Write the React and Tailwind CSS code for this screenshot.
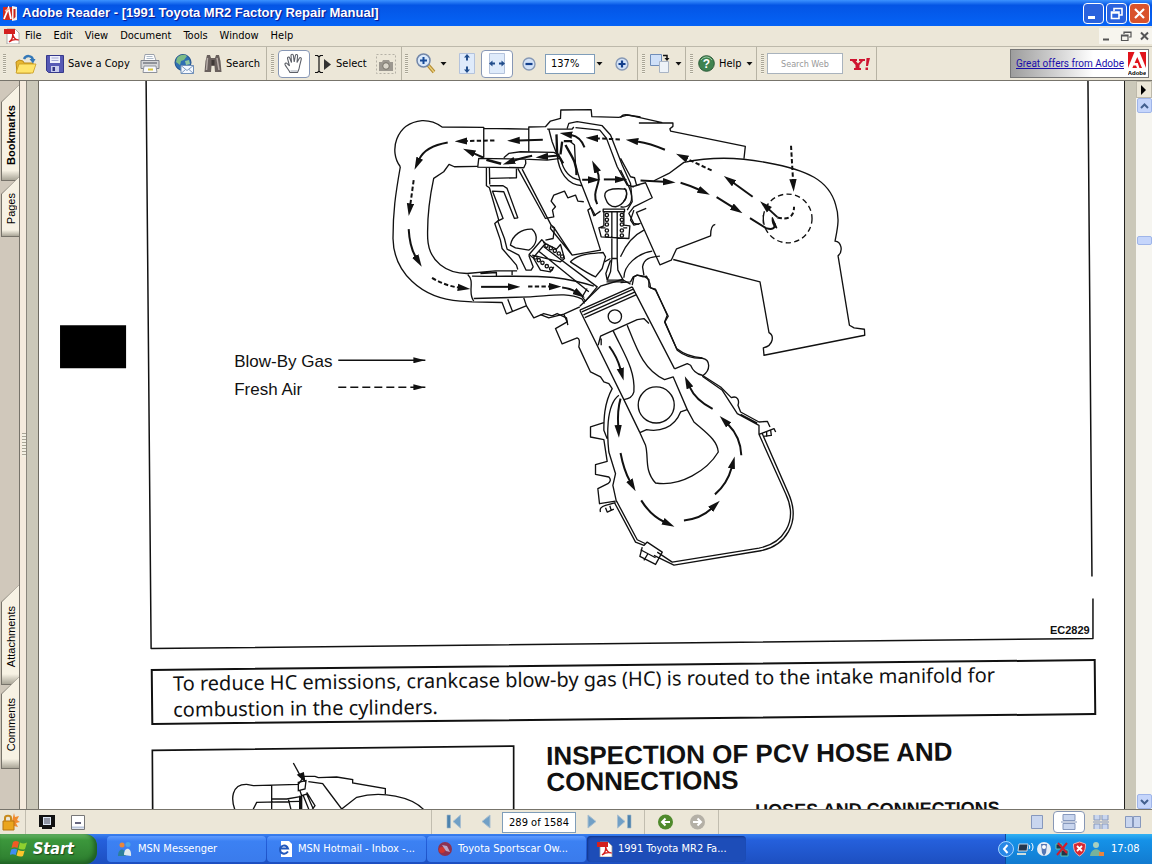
import React from 'react';

const menus = ['File', 'Edit', 'View', 'Document', 'Tools', 'Window', 'Help'];

const Grip = () => (
    <div className="w-[3px] h-5 shrink-0 bg-[repeating-linear-gradient(to_bottom,#a9a596_0_1px,#f4f1e4_1px_2px)]"></div>
);

const Caret = () => (
    <svg width="7" height="4" viewBox="0 0 7 4" className="shrink-0"><path d="M0.5 0h6L3.5 3.5z" fill="#111" /></svg>
);

const PdfIcon = ({ size = 16 }) => (
    <svg width={size} height={size} viewBox="0 0 16 16" className="shrink-0">
        <path d="M3 1h8l4 4v11H3z" fill="#fff" stroke="#999" strokeWidth="0.8" />
        <path d="M0 1h11v5H0z" fill="#d3201f" />
        <path d="M5 14c3-2 4-5 3.600-8 1 4 3 6 6 6-3-1-7 0-9.600 2z" fill="none" stroke="#d3201f" strokeWidth="1.300" />
    </svg>
);

const ReaderIcon = () => (
    <svg width="14" height="15" viewBox="0 0 14 15" className="shrink-0">
        <path d="M0 1h14v13H0z" fill="#d42a1c" />
        <path d="M9 0l5 1v13l-5 1z" fill="#f4f1ee" />
        <path d="M10.500 3l2 0v8l-2 2z" fill="#c9251b" />
        <path d="M1 13L5.500 2 8 13" stroke="#fff" strokeWidth="1.800" fill="none" />
        <path d="M2 5l4-2" stroke="#f6b8a8" strokeWidth="1.500" />
    </svg>
);

const AdobeLogo = () => (
    <svg width="18" height="24" viewBox="0 0 18 24" className="shrink-0">
        <path d="M0 0h18v16H0z" fill="#e0141c" />
        <path d="M6.500 0h5L18 16h-4l-4.700-11L6.600 11h3.200l1.600 5H9L8 13.500H5.400L4.400 16H0z" fill="#fff" />
        <text x="9" y="23" textAnchor="middle" fontSize="6" fontWeight="bold" fontFamily="Liberation Sans, sans-serif">Adobe</text>
    </svg>
);

const FolderIcon = () => (
    <svg width="22" height="20" viewBox="0 0 22 20" className="shrink-0">
        <path d="M1 8l3-2 4 1 1 2h9v9l-3 1H2z" fill="#e8b730" stroke="#bd8c16" />
        <path d="M4 10h17l-3 9H1z" fill="#ffe46a" stroke="#c99c22" strokeWidth="0.800" />
        <path d="M9 5c2-4 8-4 9 1" fill="none" stroke="#3478b8" strokeWidth="2.500" />
        <path d="M14.500 5h6L18 9.500z" fill="#3478b8" />
    </svg>
);

const FloppyIcon = () => (
    <svg width="18" height="18" viewBox="0 0 18 18" className="shrink-0">
        <path d="M0.500 0.500h17v17h-15l-2-2z" fill="#5659b5" stroke="#36398b" />
        <path d="M4 1h10v7H4z" fill="#eef0fb" />
        <path d="M5.500 3h7M5.500 5.500h7" stroke="#a3a7d4" />
        <path d="M5 11h8v6H5z" fill="#c9ccec" />
        <path d="M6.500 12h2.500v4H6.500z" fill="#303383" />
    </svg>
);

const PrinterIcon = () => (
    <svg width="20" height="19" viewBox="0 0 20 19" className="shrink-0">
        <path d="M5 0.500h9l2 6H4z" fill="#fff" stroke="#9aa0aa" />
        <path d="M6.500 2.500h6M6.500 4.500h7" stroke="#9ab" strokeWidth="0.800" />
        <path d="M1 6.500h18v8H1z" fill="#d5d6d8" stroke="#80838b" />
        <path d="M3 9h14" stroke="#777b84" strokeWidth="1.500" />
        <path d="M4 12h12l1 6.500H3z" fill="#f7f8fb" stroke="#8e929b" />
        <path d="M8 14.500h5v2H8z" fill="#d8c439" />
    </svg>
);

const GlobeMailIcon = () => (
    <svg width="20" height="20" viewBox="0 0 20 20" className="shrink-0">
        <circle cx="9" cy="8.500" r="8" fill="#2f6fb2" stroke="#1c4e8b" />
        <path d="M3 4c3-4 8-4 10-2l-3 4-3 1-1 4-4-3z" fill="#7dbb86" />
        <path d="M11 7l4-1 1 4-4 1z" fill="#8fc6a0" />
        <path d="M7 11.500h12.500v8H7z" fill="#f4f8ff" stroke="#7190b8" />
        <path d="M7 11.500l6 5 6.500-5M7 19.500l4.500-4M19.500 19.500L15 15.500" fill="none" stroke="#7190b8" strokeWidth="0.900" />
    </svg>
);

const BinocularsIcon = () => (
    <svg width="18" height="19" viewBox="0 0 18 19" className="shrink-0">
        <path d="M3 1h3l1 3h4l1-3h3l1.500 6L17.500 18H11l-.5-6h-3L7 18H0.500L1.500 7z" fill="#69605d" />
        <path d="M3.500 4l-1 12M13 4l2 12" stroke="#b6aca7" strokeWidth="1.500" />
        <path d="M7.500 6h3v5h-3z" fill="#3f3937" />
    </svg>
);

const HandIcon = () => (
    <svg width="20" height="21" viewBox="0 0 20 21" className="shrink-0">
        <path
            d="M6 19.500C5 17 2 14 1 11.500c-.4-1.500 1.500-2 2.500-.7L5.500 13 3.500 5.500c-.3-1.600 1.700-2 2.200-.5L7.500 9.500 7 2.500c0-1.700 2.200-1.700 2.400 0L10.200 9l1.200-6.500c.3-1.500 2.300-1.300 2.200.3L13 9.500l2.300-4.300c.8-1.300 2.400-.5 2 .9L15.800 12c-.3 3-1 5-2.300 7.500z"
            fill="#fff" stroke="#5d6068" strokeWidth="1.100"
        />
        <path d="M6.500 18h7" stroke="#9fa6b2" />
    </svg>
);

const CameraIcon = () => (
    <svg width="20" height="20" viewBox="0 0 20 20" className="shrink-0">
        <path d="M0.500 0.500h19v19H0.500z" fill="none" stroke="#b5b1a6" strokeDasharray="2 2" />
        <path d="M3 8h3l1-2h6l1 2h3v9H3z" fill="#9c9890" />
        <circle cx="10" cy="12" r="3.300" fill="#dad6cb" stroke="#777369" />
    </svg>
);

const ZoomCircle = ({ plus }) => (
    <svg width="14" height="14" viewBox="0 0 14 14" className="shrink-0">
        <circle cx="7" cy="7" r="6" fill="#d3e2f7" stroke="#8799b5" strokeWidth="1.400" />
        <path d={plus ? 'M3.500 7h7M7 3.500v7' : 'M3.500 7h7'} stroke="#123f8c" strokeWidth="2.200" />
    </svg>
);

const MagnifierIcon = () => (
    <svg width="20" height="21" viewBox="0 0 20 21" className="shrink-0">
        <path d="M12 12l6 7" stroke="#b58b31" strokeWidth="3.500" />
        <path d="M12 12l6 7" stroke="#ecd27c" strokeWidth="1.300" />
        <circle cx="7.500" cy="7.500" r="6.500" fill="#d9e8fa" stroke="#7186a8" strokeWidth="1.500" />
        <path d="M4 7.500h7M7.500 4v7" stroke="#174b98" strokeWidth="2" />
    </svg>
);

const PageFit = ({ wide }) => (
    <svg width="18" height="21" viewBox="0 0 18 21" className="shrink-0">
        <path d="M1.500 0.500h15v20h-15z" fill="#dfebfb" stroke="#b4c3dc" />
        {wide ? (
            <path d="M1 10.500l3.500-3v2H7v2H4.500v2zM17 10.500l-3.500-3v2H11v2h2.500v2z" fill="#214d8b" />
        ) : (
            <path d="M9 1L6 4.500h2v3h2v-3h2zM9 20l-3-3.500h2v-3h2v3h2z" fill="#214d8b" />
        )}
    </svg>
);

const RotateIcon = () => (
    <svg width="22" height="21" viewBox="0 0 22 21" className="shrink-0">
        <path d="M1.500 1.500h11v11h-11z" fill="#cfe0f8" stroke="#6f8db9" />
        <path d="M10.500 8.500h9v11h-9z" fill="#eef3f8" stroke="#a9b4c4" />
        <path d="M14 2.500h4v3" fill="none" stroke="#111" strokeWidth="1.500" />
        <path d="M15.500 5h5L18 8z" fill="#111" />
    </svg>
);

const HelpIcon = () => (
    <svg width="17" height="17" viewBox="0 0 17 17" className="shrink-0">
        <circle cx="8.500" cy="8.500" r="7.800" fill="#3f8350" stroke="#2b5a38" />
        <path d="M3 5c3-4 8-4 11 0" stroke="#9dcca6" fill="none" />
        <text x="8.500" y="13" textAnchor="middle" fontSize="12" fontWeight="bold" fill="#fff" fontFamily="Liberation Sans, sans-serif">?</text>
    </svg>
);

const YahooIcon = () => (
    <svg width="20" height="14" viewBox="0 0 20 14" className="shrink-0" fill="#cf1430">
        <path d="M0 2h7v2H5.800L8 6.500 10.500 4H9V2h6v2h-2L9.500 8v3H11v2H4v-2h1.500V8L2 4H0z" />
        <path d="M16.500 1H20l-2 8h-2zM15.500 10.500h2.500V13h-2.500z" />
    </svg>
);

const Toolbar = () => (
    <div className="h-[35px] shrink-0 flex items-stretch bg-[#ece7d8] border-y border-t-[#bdb9ab] border-b-[#77746b]">
        <div className="w-[267px] flex items-center pl-[3px] border-r border-[#b7b3a4]">
            <Grip />
            <button aria-label="Open" className="w-10 flex justify-center"><FolderIcon /></button>
            <button className="flex items-center gap-1 w-[94px]"><FloppyIcon />Save a Copy</button>
            <button aria-label="Print" className="w-6 flex"><PrinterIcon /></button>
            <button aria-label="Email" className="w-10 flex justify-center"><GlobeMailIcon /></button>
            <button className="flex items-center gap-1"><BinocularsIcon />Search</button>
        </div>
        <div className="w-[135px] flex items-center gap-1 pl-1 border-r border-[#b7b3a4]">
            <Grip />
            <button aria-label="Hand tool" className="w-8 h-[28px] flex items-center justify-center bg-white border border-[#8797b5] rounded-sm"><HandIcon /></button>
            <button className="flex items-center gap-1 w-14">
                <svg width="18" height="18" viewBox="0 0 18 18" className="shrink-0">
                    <path d="M1 0.500h2.500L5 2l1.500-1.500H9M5 2v14M1 17.500h2.500L5 16l1.500 1.500H9" fill="none" stroke="#111" strokeWidth="1.200" />
                    <path d="M10 4v11l7-5.500z" fill="#333" />
                </svg>
                Select
            </button>
            <button aria-label="Snapshot" className="pl-0.5"><CameraIcon /></button>
        </div>
        <div className="w-[236px] flex items-center pl-[3px] border-r border-[#b7b3a4]">
            <Grip />
            <button aria-label="Zoom in tool" className="flex items-center gap-1 pl-2 w-[45px]"><MagnifierIcon /><Caret /></button>
            <button aria-label="Fit page" className="w-7 flex justify-center"><PageFit /></button>
            <button aria-label="Fit width" className="w-8 h-[28px] flex items-center justify-center bg-white border border-[#8797b5] rounded-sm"><PageFit wide /></button>
            <button aria-label="Zoom out" className="w-8 flex justify-center"><ZoomCircle /></button>
            <input aria-label="Zoom level" defaultValue="137%" className="w-[50px] h-5 pl-[5px] bg-white border border-[#7f9db9]" />
            <button aria-label="Zoom levels" className="w-2 flex justify-center"><Caret /></button>
            <button aria-label="Zoom in" className="pl-3"><ZoomCircle plus /></button>
        </div>
        <div className="w-12 flex items-center gap-1 pl-1 border-r border-[#b7b3a4]">
            <Grip />
            <button aria-label="Rotate" className="flex items-center gap-1"><RotateIcon /><Caret /></button>
        </div>
        <div className="w-[71px] flex items-center gap-[5px] pl-1 border-r border-[#b7b3a4]">
            <Grip />
            <button className="flex items-center gap-1"><HelpIcon />Help<Caret /></button>
        </div>
        <div className="w-[120px] flex items-center gap-[3px] pl-1 border-r border-[#b7b3a4]">
            <Grip />
            <input aria-label="Search Web" placeholder="Search Web" className="w-[76px] h-[21px] text-center text-[9px] bg-white border border-[#a9b3bd] placeholder:text-[#999]" />
            <button aria-label="Yahoo" className="w-7 flex justify-center"><YahooIcon /></button>
        </div>
        <div className="flex-1"></div>
        <a href="#offers" className="my-0.5 mr-[3px] w-[139px] flex items-center justify-between pl-[5px] pr-0.5 border border-[#777] bg-linear-to-r from-[#9d9d9d] to-white to-60% text-[#1a0dab]">
            <span className="underline text-[10px] whitespace-nowrap font-['Roboto',sans-serif]">Great offers from Adobe</span>
            <AdobeLogo />
        </a>
    </div>
);

const SideTab = ({ label, className }) => (
    <button className={`w-[18px] pl-px pb-px bg-[#77736a] [clip-path:polygon(0_17px,100%_0,100%_100%,0_100%)] font-['Liberation_Sans',sans-serif] ${className}`}>
        <span className="flex w-full h-full items-center justify-center bg-linear-to-b from-[#f7f2e4] from-90% to-[#aaa698] [clip-path:polygon(0_17px,100%_0,100%_100%,0_100%)]">
            <span className="[writing-mode:vertical-rl] rotate-180 pb-1">{label}</span>
        </span>
    </button>
);

const Sidebar = () => (
    <>
        <div className="w-5 shrink-0 flex flex-col items-end bg-[#d0c8bb] border-r border-[#77736a]">
            <SideTab label="Bookmarks" className="h-[96px] mt-1 font-bold" />
            <SideTab label="Pages" className="h-[60px] -mt-1" />
            <div className="flex-1"></div>
            <SideTab label="Attachments" className="h-[100px]" />
            <SideTab label="Comments" className="h-[92px] -mt-2 mb-10" />
        </div>
        <div className="w-[7px] shrink-0 flex items-center bg-[#f5ebdd] border-r border-[#8a867c]">
            <div className="w-1 h-6 ml-0.5 bg-[repeating-linear-gradient(to_bottom,#a9a596_0_1px,#f4f1e4_1px_3px)]"></div>
        </div>
        <div className="w-3 shrink-0 bg-[#cbc8b9] border-r border-[#6e6b62]"></div>
    </>
);

const Arrow = ({ d, dash }) => (
    <path d={d} strokeWidth="6" strokeDasharray={dash ? '13 7' : undefined} markerEnd="url(#head)" />
);

const EngineFigure = () => (
    <svg viewBox="39 81 1084 570" className="block w-full h-auto" fill="none" stroke="#111" strokeLinejoin="round">
        <defs>
            <marker id="head" viewBox="0 0 38 22" markerWidth="38" markerHeight="24" refX="3" refY="11" orient="auto" markerUnits="userSpaceOnUse">
                <path d="M0 0L38 11L0 22z" fill="#111" stroke="none" />
            </marker>
            <marker id="small-head" viewBox="0 0 12 6" markerWidth="12" markerHeight="6" refX="12" refY="3" orient="auto" markerUnits="userSpaceOnUse">
                <path d="M0 0L12 3L0 6z" fill="#111" stroke="none" />
            </marker>
        </defs>

        {/* frame of the scanned plate */}
        <path d="M146 81L151 648L1092 638V598M1087 81L1091 576" strokeWidth="1.500" />
        <path d="M60 325h66v43H60z" fill="#000" stroke="none" />
        <text x="1049" y="634" fontSize="11" fontWeight="bold" fill="#111" stroke="none" fontFamily="Liberation Sans, sans-serif">EC2829</text>

        {/* legend */}
        <g fill="#111" stroke="none" fontSize="17" fontFamily="Liberation Sans, sans-serif">
            <text x="234" y="367">Blow-By Gas</text>
            <text x="234" y="395">Fresh Air</text>
        </g>
        <path d="M338 360H425" strokeWidth="1.500" markerEnd="url(#small-head)" />
        <path d="M338 387H425" strokeWidth="1.500" strokeDasharray="8 4" markerEnd="url(#small-head)" />

        {/* intake pipe and cylinder head */}
        <g transform="translate(380 95) scale(0.33333)" strokeWidth="4">
            <path d="M60 215C25 170 45 85 125 77C150 76 170 85 185 96L310 97V187M310 100L445 102M445 170V96L495 95L510 78L540 70L541 45L632 44L634 65L715 67L740 60L780 66" />
            <path d="M60 215C45 300 38 350 38 430C40 530 120 610 240 618L275 620L365 622L378 656L437 632M382 612L396 648M430 608L438 632L460 668L490 655L515 662L530 655L558 668L562 690" />
            <path d="M292 214L222 215L206 208L190 230L160 250C145 320 140 370 142 430C145 500 200 535 260 535L345 527L410 527M300 535L348 532V543M395 527V540" />
            <path d="M262 538C285 560 260 590 280 618M275 543C370 545 450 540 520 547C560 552 600 560 640 573M280 610L450 605C510 602 560 590 605 612L612 625" />
            <path d="M295 190L435 192L436 205L430 218L292 216ZM370 188L385 175L420 170L520 172L537 180M430 192L500 195L540 190" />
            <path d="M318 218V272L327 278L355 375L343 385L360 435L365 460L408 510L412 523M327 218L328 268M330 250L408 248V220M328 272L368 272L380 280L412 368L402 370L370 290L336 288L368 370L352 378L372 430L380 462L415 480L437 525L452 525L458 515L445 480" />
            <path d="M412 220L495 370L520 365L516 345L525 335L512 318L520 300L552 288L562 308L585 300L592 318L610 320M425 222L512 390L510 400L575 480M515 395L522 400L575 480L660 465L622 345L632 338L645 362" />
            <path d="M390 450C395 420 425 400 455 402C475 420 470 450 445 465L405 458Z" />
            <path d="M446 478L484 434L495 445L458 488ZM488 442L528 462L540 448L552 490L540 500L455 480M458 487L480 525L510 530L520 515M475 468L625 590M490 455L650 575L615 618L605 605L620 580M512 390L522 398L518 430L495 435M575 495C600 475 640 475 668 472L675 485L665 520L645 545C620 535 600 520 570 500Z" />
            <path d="M500 102H575L580 96M505 102L515 140L530 180C535 230 560 270 605 272M540 190C548 225 565 250 598 255M570 140L582 150L585 210L600 260L640 362L660 348M585 98L658 105L678 130L710 215L740 270L760 275M560 100L565 85L590 80L665 92L690 120L725 210L750 265L755 320L740 345" />
            <path d="M528 118L530 175L548 205M545 140L540 178M550 138H575M555 150C570 180 590 200 588 240" strokeWidth="7" />
            <path d="M675 310C665 285 690 278 735 282C745 300 730 330 705 335C690 335 680 325 675 310Z" />
            <path d="M668 342H732V350H668ZM670 350V392L655 398L662 425L745 430L748 392L730 390V350M660 398H675M740 398H728M694 350V490L690 530L680 555H728L712 525L710 490V350M694 490H710M678 560H730M672 500L690 490M680 555L676 535L690 495M760 345L750 375L760 390L780 385" />
            <circle cx="679" cy="360" r="5" /><circle cx="679" cy="374" r="5" /><circle cx="679" cy="388" r="5" /><circle cx="679" cy="406" r="5" /><circle cx="679" cy="421" r="5" />
            <circle cx="724" cy="360" r="5" /><circle cx="724" cy="374" r="5" /><circle cx="724" cy="388" r="5" /><circle cx="724" cy="406" r="5" /><circle cx="724" cy="421" r="5" />
            <circle cx="498" cy="452" r="5" /><circle cx="511" cy="459" r="5" /><circle cx="523" cy="467" r="5" /><circle cx="535" cy="475" r="5" /><circle cx="545" cy="484" r="5" />
            <circle cx="465" cy="487" r="5" /><circle cx="475" cy="495" r="5" /><circle cx="486" cy="503" r="5" /><circle cx="499" cy="513" r="5" /><circle cx="512" cy="521" r="5" />
            <Arrow d="M487 134L415 136" />
            <Arrow d="M342 136L258 138" dash />
            <Arrow d="M202 142C155 150 127 170 117 192" />
            <Arrow d="M100 255L90 328" dash />
            <Arrow d="M85 402Q88 455 106 485" />
            <Arrow d="M155 548Q195 572 235 577" dash />
            <Arrow d="M302 575H385" />
            <Arrow d="M443 574H508" dash />
            <Arrow d="M545 577Q570 580 584 589" />
            <Arrow d="M310 188L280 175" />
            <Arrow d="M535 181L500 184" />
            <Arrow d="M455 182Q420 190 400 197" />
            <path d="M318 194L362 206" strokeWidth="8" />
            <Arrow d="M612 157Q600 125 572 120" />
            <Arrow d="M718 133L650 130" dash />
            <Arrow d="M650 327C630 285 668 265 650 228" />
            <Arrow d="M605 254H625" />
            <Arrow d="M670 253H705" />
        </g>

        {/* air cleaner side */}
        <g transform="translate(620 95) scale(0.33333)" strokeWidth="4">
            <path d="M0 68Q5 56 25 60L125 83M55 84H157V94L148 101L150 108L374 154L370 191" />
            <path d="M100 257L145 235L190 202C270 185 350 185 440 203C560 225 625 255 645 330C658 370 650 400 643 438C662 440 668 468 652 482L686 690L700 698L731 702L732 720L430 780L428 758C460 750 460 720 445 712L418 560L158 493" />
            <path d="M284 388Q270 390 270 422L168 461L152 495L118 509L48 352L77 340" />
            <path d="M0 190L30 245L42 248L48 270L75 263L95 308L40 335L25 355L40 385L55 388M0 225L25 275C45 320 25 340 0 335M10 280C22 285 20 310 10 318M35 275L60 268" />
            <path d="M0 485C15 450 40 420 70 405M10 548C10 510 50 475 95 468M70 540L66 515C70 490 90 485 118 483M0 562L30 560L38 545L50 540L68 545L78 543L88 565L90 578L105 582L140 660L132 680L168 760Q200 785 245 788" />
            <circle cx="501" cy="370" r="73" strokeDasharray="16 10" />
            <path d="M428 360V385" />
            <Arrow d="M133 164Q90 145 50 139" />
            <Arrow d="M273 226L198 191" dash />
            <Arrow d="M396 305L338 263" />
            <Arrow d="M60 256L130 260" />
            <Arrow d="M180 263Q210 272 236 284" />
            <Arrow d="M288 306L336 336" />
            <path d="M388 369L436 399Q465 408 462 385" strokeWidth="6" />
            <path d="M455 368Q453 390 468 398Z" fill="#111" />
            <Arrow d="M470 366L444 342" />
            <path d="M470 367Q520 380 520 335" strokeWidth="6" strokeDasharray="13 8" />
            <Arrow d="M511 152L517 255" dash />
        </g>

        {/* piston, con rod and crankcase */}
        <g transform="translate(540 270) scale(0.33333)" strokeWidth="4">
            <path d="M118 120L250 388L298 487M275 50L402 296M118 120L275 50M124 125L280 56M129 134L284 65M133 142L288 73M118 108L180 48L245 28L270 42" />
            <path d="M275 45L280 20L290 15L310 18L325 28V50L345 60L383 138L373 155L410 240Q440 265 485 264C510 268 510 300 488 315M402 296L440 280L450 285Q460 310 485 315L540 350L572 382C590 375 597 390 592 405L600 425L655 455L680 453L688 470" />
            <circle cx="223" cy="139" r="20" />
            <path d="M173 225L180 198L290 148L310 145L325 160M182 205V225M218 182C250 250 285 300 280 365Q275 385 250 388M260 165C290 240 310 300 372 328L398 320L440 418" />
            <circle cx="347" cy="404" r="54" />
            <path d="M298 487L318 478C355 485 400 475 420 425L440 418L460 455C500 490 530 510 533 545C500 600 420 650 345 638C310 600 325 560 315 525L298 487" />
            <path d="M0 133L25 143L70 132L80 155L45 175L65 221L110 203Q120 205 115 230L150 305L180 320L190 335L205 340L215 355C190 400 190 450 190 480L200 505M70 132L118 110M235 375C195 405 200 500 205 545L225 610L217 645L228 695" />
            <path d="M190 457L150 470V500L190 508L200 573L165 583V612L205 620Q215 630 202 640L172 655L177 700L225 692M180 725Q175 710 195 705L225 697M195 712L200 725L220 716M208 706L212 720" />
            <path d="M485 318L545 360L590 430L655 465V492L735 670C775 755 725 820 655 833L395 875L350 845M664 488L742 666C785 760 730 828 660 841L400 884L340 855M600 432L650 458M655 492L700 475L705 485M668 498L692 495L690 480M678 485V500" />
            <path d="M222 697L285 815L310 825L320 815L365 845L345 882L298 858L305 830M228 692L290 808L315 820M300 838L345 862M322 850L310 870" />
            <Arrow d="M206 228Q230 260 240 297" />
            <Arrow d="M240 385Q230 420 233 467" />
            <Arrow d="M240 548Q250 600 268 632" />
            <Arrow d="M302 690Q330 735 370 754" />
            <Arrow d="M430 750Q480 745 512 715" />
            <Arrow d="M523 672Q560 640 573 592" />
            <Arrow d="M602 555Q600 500 562 462" />
            <Arrow d="M516 416Q465 390 447 350" />
        </g>
    </svg>
);

const HoseFigure = () => (
    <svg viewBox="151 745 364 200" className="block w-[364px] h-auto shrink-0" fill="none" stroke="#111">
        <g transform="translate(140 640) scale(0.33333)" strokeWidth="4">
            <path d="M40 900L37 334L1121 321V900" strokeWidth="5" />
            <path d="M288 520C270 480 275 435 320 436L340 440L475 436L492 412H525L535 416L590 414L638 422V432L736 449V466M335 520L350 490L480 487M395 440V520M395 480H440L485 472M445 480L455 520" />
            <path d="M475 430L498 425L495 450L475 455ZM480 455L485 470L500 465L520 510M490 470L510 520L525 500L500 460M505 428L548 434L560 450L605 510L650 475C720 455 820 470 858 520" />
            <path d="M460 372L482 412" />
            <path d="M474 408L490 402L494 426z" fill="#111" />
            <path d="M482 470V530" strokeWidth="10" />
        </g>
    </svg>
);

const Page = () => (
    <div className="flex-1 min-w-0 bg-white border-r border-[#22211f] overflow-hidden text-[#111] font-['Liberation_Sans',sans-serif]">
        <EngineFigure />
        <div className="mt-3 ml-28 mr-7 min-h-14 -rotate-[0.6deg] border-2 border-[#111] px-5 text-xl leading-[26px] font-['Noto_Sans',sans-serif]">
            <p>To reduce HC emissions, crankcase blow-by gas (HC) is routed to the intake manifold for combustion in the cylinders.</p>
        </div>
        <div className="flex gap-8 mt-6 ml-28 mr-7">
            <HoseFigure />
            <div className="flex-1 -rotate-[0.6deg]">
                <h1 className="-mt-1 text-[26px] leading-[26px] font-bold whitespace-nowrap">
                    INSPECTION OF PCV HOSE AND
                    <br />
                    CONNECTIONS
                </h1>
                <h2 className="mt-2 pr-24 text-lg leading-5 font-bold text-right">HOSES AND CONNECTIONS</h2>
            </div>
        </div>
    </div>
);

const ScrollArrow = ({ up }) => (
    <button aria-label={up ? 'Scroll up' : 'Scroll down'} className="w-[15px] h-[15px] shrink-0 flex items-center justify-center rounded-xs bg-[#c5d5fb] border border-[#9fb5e9]">
        <svg width="9" height="6" viewBox="0 0 9 6"><path d={up ? 'M1 5L4.5 1.500 8 5' : 'M1 1L4.500 4.500 8 1'} fill="none" stroke="#43608f" strokeWidth="2" /></svg>
    </button>
);

const Scrollbar = () => (
    <>
        <div className="w-[11px] shrink-0 bg-[#cbc8b9]"></div>
        <div className="w-4 shrink-0 flex flex-col items-center bg-[#f6f5f0]">
            <button aria-label="Page menu" className="w-4 h-[17px] flex items-center justify-center bg-[#ece7d8] border border-[#bdb9ab]">
                <svg width="6" height="10" viewBox="0 0 6 10"><path d="M0 0l5 5-5 5z" fill="#000" /></svg>
            </button>
            <ScrollArrow up />
            <div className="h-[123px]"></div>
            <div className="w-[15px] h-[9px] rounded-xs bg-[#c5d5fb] border border-[#9fb5e9]"></div>
            <div className="flex-1"></div>
            <ScrollArrow />
        </div>
    </>
);

const NavArrow = ({ flip, bar, label }) => (
    <button aria-label={label} className="w-8 flex justify-center">
        <svg width="16" height="16" viewBox="0 0 16 16" className={flip ? '-scale-x-100' : ''}>
            <path d={bar ? 'M14.500 1v13L7 7.500z' : 'M12 1v13L4 7.500z'} fill="#71a0c6" stroke="#a9bfd0" />
            {bar && <path d="M1 1h3.500v13H1z" fill="#4d83ae" stroke="#9db7cb" strokeWidth="0.600" />}
        </svg>
    </button>
);

const ViewArrow = ({ label, color, flip }) => (
    <button aria-label={label} className="w-8 flex justify-center">
        <svg width="17" height="16" viewBox="0 0 17 16" className={flip ? '-scale-x-100' : ''}>
            <circle cx="8.500" cy="8" r="7.500" fill={color} />
            <path d="M13 8H6M8.500 4.500L5 8l3.500 3.500" stroke="#fff" strokeWidth="2" fill="none" />
        </svg>
    </button>
);

const LayoutIcon = ({ d }) => (
    <svg width="16" height="16" viewBox="0 0 16 16"><path d={d} fill="#c9d6ef" stroke="#8698bd" /></svg>
);

const StatusBar = () => (
    <div className="h-[25px] shrink-0 flex items-center bg-[#ece7d8] border-t border-[#77746b]">
        <div className="w-[26px] h-full flex items-center pl-0.5 border-r border-[#c1bdaf]">
            <svg width="18" height="18" viewBox="0 0 18 18">
                <path d="M12 0l1 4 4-1-2 4 3 2-4 1 2 4-4-1-1 4-2-5z" fill="#f08a2c" />
                <path d="M1 8h11v9H1z" fill="#eaa51d" stroke="#b57412" />
                <path d="M3 8V5c0-3 6-3 6 0v3" fill="none" stroke="#c78a1c" strokeWidth="2" />
            </svg>
        </div>
        <div className="w-[406px] h-full flex items-center gap-4 pl-[13px] border-r border-[#c1bdaf]">
            <button aria-label="Full screen">
                <svg width="16" height="15" viewBox="0 0 16 15"><path d="M0 0h16v12H0zM3 14h10v-2H3z" fill="#111" /><path d="M4 2h8v8H4z" fill="#dce6f4" /><path d="M5 4h6M5 6h6M5 8h6" stroke="#445" /></svg>
            </button>
            <button aria-label="Reading mode">
                <svg width="14" height="15" viewBox="0 0 14 15"><path d="M0.500 0.500h13v14H0.500z" fill="#fff" stroke="#777" /><path d="M4 8h6" stroke="#335" strokeWidth="1.500" /><path d="M1 12.500h12" stroke="#b9c5db" strokeWidth="2" /></svg>
            </button>
        </div>
        <div className="w-[213px] h-full flex items-center pl-1.5 border-r border-[#c1bdaf]">
            <NavArrow label="First page" bar />
            <NavArrow label="Previous page" />
            <input aria-label="Page" defaultValue="289 of 1584" className="w-[74px] h-[21px] text-center bg-white border border-[#7f9db9]" />
            <NavArrow label="Next page" flip />
            <NavArrow label="Last page" flip bar />
        </div>
        <div className="w-[74px] h-full flex items-center pl-1 border-r border-[#c1bdaf]">
            <ViewArrow label="Previous view" color="#4f8a2c" />
            <ViewArrow label="Next view" color="#b4b0a6" flip />
        </div>
        <div className="flex-1"></div>
        <button aria-label="Single page" className="w-8 flex justify-center"><LayoutIcon d="M2.500 1.500h11v13h-11z" /></button>
        <button aria-label="Continuous" className="w-8 h-[22px] flex items-center justify-center bg-white border border-[#8797b5] rounded-sm"><LayoutIcon d="M2 0.500h12v6H2zM2 9.500h12v6H2zM0 8h16" /></button>
        <button aria-label="Continuous facing" className="w-8 flex justify-center"><LayoutIcon d="M1 1v5h6V1M9 1v5h6V1M1 15v-5h6v5M9 15v-5h6v5M0 8h16" /></button>
        <button aria-label="Facing" className="w-8 mr-[3px] flex justify-center"><LayoutIcon d="M0.500 2.500h7v11h-7zM8.500 2.500h7v11h-7z" /></button>
    </div>
);

const XpFlag = () => (
    <svg width="19" height="18" viewBox="0 0 19 18" className="shrink-0">
        <path d="M3 2c2-1.500 4-1 6 0L7.500 8c-2-1-4-1-6 0z" fill="#ee5a25" />
        <path d="M10 2.500c2 1 4 1.500 7 0L15 9c-2 1-4.500.5-6.500-.5z" fill="#8fd02f" />
        <path d="M1.200 9.500c2-1 4-1 6 0L5.700 15c-2-1-4-1-6 0z" fill="#3f8df0" />
        <path d="M8.200 10c2 1 4.500 1.500 6.500.5L13 16c-2 1-4.500.5-6.500-.5z" fill="#fbc52c" />
    </svg>
);

const tasks = [
    {
        title: 'MSN Messenger',
        icon: (
            <svg width="16" height="16" viewBox="0 0 16 16"><circle cx="5" cy="4" r="2.500" fill="#e9873a" /><path d="M1 15c0-8 7-9 8 0z" fill="#2c7f9c" /><circle cx="11" cy="3.500" r="2.500" fill="#4ba5e8" /><path d="M7 14c0-9 8-8 7 1z" fill="#dfe9ed" /></svg>
        ),
    },
    {
        title: 'MSN Hotmail - Inbox -...',
        icon: (
            <svg width="16" height="16" viewBox="0 0 16 16"><path d="M4 0h8l3 3v13H4z" fill="#fff" /><path d="M11 10.500c-3 4-8 2-8-2s6-6 8-1H3" fill="none" stroke="#2258bd" strokeWidth="2" /></svg>
        ),
    },
    {
        title: 'Toyota Sportscar Ow...',
        icon: (
            <svg width="16" height="16" viewBox="0 0 16 16"><circle cx="8" cy="8" r="7" fill="#8c3151" /><circle cx="5" cy="9" r="3" fill="#d0342e" /><path d="M5 4l5 1 3 6-4-1z" fill="#b9a5c6" /></svg>
        ),
    },
    { title: '1991 Toyota MR2 Fa...', icon: <PdfIcon />, active: true },
];

const Taskbar = () => (
    <div className="h-[30px] shrink-0 flex items-stretch bg-linear-to-b from-[#3a80ef] via-[#2560dc] via-20% to-[#1d4fc0] text-white">
        <button className="w-[97px] mr-2.5 flex items-center gap-1 pl-2.5 rounded-r-xl bg-linear-to-b from-[#66b366] via-[#3c973c] via-20% to-[#2c7c2e] shadow-[inset_-3px_-2px_4px_#1f5e24]">
            <XpFlag />
            <span className="text-base leading-none italic font-bold [text-shadow:1px_1px_1px_#1c4a1c]">Start</span>
        </button>
        {tasks.map(t => (
            <button
                key={t.title}
                className={`w-[159px] mr-px my-0.5 flex items-center gap-[5px] pl-2.5 rounded-sm whitespace-nowrap ${t.active ? 'bg-[#1d4db8] shadow-[inset_1px_1px_2px_#12358a]' : 'bg-linear-to-b from-[#5f9bff] via-[#3c81f3] via-20% to-[#3a7bec]'}`}
            >
                {t.icon}
                <span>{t.title}</span>
            </button>
        ))}
        <div className="flex-1"></div>
        <div className="w-[147px] flex items-center gap-0.5 border-l border-[#0f4a9e] bg-linear-to-b from-[#32b2f3] via-[#1592e8] via-20% to-[#127bd0]">
            <svg width="16" height="16" viewBox="0 0 16 16" className="-ml-2 shrink-0"><circle cx="8" cy="8" r="7.500" fill="#2787e6" stroke="#a6d6ff" /><path d="M9.500 4L6 8l3.500 4" stroke="#fff" strokeWidth="2" fill="none" /></svg>
            <svg width="18" height="16" viewBox="0 0 18 16" className="shrink-0"><path d="M3 3h9l-1 7H2z" fill="#24364d" stroke="#c8d8e8" /><path d="M1 13h9" stroke="#cdd" strokeWidth="2" /><path d="M13 4c1 1 1 3 0 4M15.500 2c2 2 2 6 0 8" stroke="#fff" fill="none" /></svg>
            <svg width="16" height="16" viewBox="0 0 16 16" className="shrink-0"><circle cx="8" cy="8" r="7" fill="#e6edf5" /><path d="M5 3h6l-1 9-2 3-2-3z" fill="#5677b4" /><circle cx="8" cy="6" r="2" fill="#fff" /></svg>
            <svg width="16" height="16" viewBox="0 0 16 16" className="shrink-0"><path d="M2 3h6v5H2zM7 9h7v6H7z" fill="#233546" stroke="#5ac3b5" /><path d="M4 2l9 10M13 2L3 14" stroke="#d01e2c" strokeWidth="2" /></svg>
            <svg width="15" height="16" viewBox="0 0 15 16" className="shrink-0"><path d="M7.500 1l6 2c0 6-1 9-6 12-5-3-6-6-6-12z" fill="#d72832" stroke="#f2b3b3" /><path d="M5 5l5 5M10 5l-5 5" stroke="#fff" strokeWidth="1.800" /></svg>
            <svg width="16" height="16" viewBox="0 0 16 16" className="shrink-0"><circle cx="7" cy="4" r="3" fill="#a9cfc0" /><path d="M1 15c1-9 11-9 12 0z" fill="#78b39b" /><path d="M10 11h5v4h-5z" fill="#e8843e" /></svg>
            <span className="pl-1 whitespace-nowrap">17:08</span>
        </div>
    </div>
);

const App = () => {
    return (
        <div className="h-screen flex flex-col overflow-hidden bg-[#ece7d8] text-[11px] leading-4 text-black font-['DejaVu_Sans_Condensed','Noto_Sans',sans-serif]">
            {/* Title bar */}
            <header className="h-[26px] shrink-0 flex items-center gap-[5px] pl-[3px] pr-0.5 bg-linear-to-b from-[#3c92ff] via-[#0455e5] via-20% to-[#0663f6] text-white">
                <ReaderIcon />
                <h1 className="flex-1 text-[13px] font-bold whitespace-nowrap [text-shadow:1px_1px_1px_#0f1089] font-['Liberation_Sans',sans-serif]">Adobe Reader - [1991 Toyota MR2 Factory Repair Manual]</h1>
                <div className="flex gap-0.5">
                    <button aria-label="Minimize" className="w-[21px] h-[21px] rounded-sm border border-white bg-[#2a62dd]">
                        <svg width="19" height="19" viewBox="0 0 19 19"><path d="M4 12h7v3H4z" fill="#fff" /></svg>
                    </button>
                    <button aria-label="Restore" className="w-[21px] h-[21px] rounded-sm border border-white bg-[#2a62dd]">
                        <svg width="19" height="19" viewBox="0 0 19 19"><path d="M7 7V4.500h8V11h-2.500M4.500 8h7.500v6.500H4.500zM4.500 9h7.500" fill="none" stroke="#fff" strokeWidth="1.600" /></svg>
                    </button>
                    <button aria-label="Close" className="w-[21px] h-[21px] rounded-sm border border-white bg-[#d9532c]">
                        <svg width="19" height="19" viewBox="0 0 19 19"><path d="M5 5l9 9M14 5l-9 9" stroke="#fff" strokeWidth="2.200" /></svg>
                    </button>
                </div>
            </header>

            {/* Menu bar */}
            <nav className="h-5 shrink-0 flex items-center pl-1">
                <PdfIcon />
                <div className="flex-1 flex gap-3 pl-[5px]">
                    {menus.map(m => <button key={m}>{m}</button>)}
                </div>
                <div className="flex gap-1 bg-[#f7f5ee]">
                    <button aria-label="Minimize document"><svg width="15" height="16" viewBox="0 0 15 16"><path d="M4 11.500h6" stroke="#555" strokeWidth="2" /></svg></button>
                    <button aria-label="Restore document"><svg width="15" height="16" viewBox="0 0 15 16"><path d="M6 6V4h7v5h-2M3.500 7h6.500v5.500H3.500zM3.500 8h6.500M6 4.500h7" fill="none" stroke="#555" strokeWidth="1.200" /></svg></button>
                    <button aria-label="Close document"><svg width="15" height="16" viewBox="0 0 15 16"><path d="M4 4.500l7 7M11 4.500l-7 7" stroke="#555" strokeWidth="2" /></svg></button>
                </div>
            </nav>

            <Toolbar />

            <main className="flex-1 min-h-0 flex">
                <Sidebar />
                <Page />
                <Scrollbar />
            </main>

            <StatusBar />
            <Taskbar />
        </div>
    );
};

export default App;
